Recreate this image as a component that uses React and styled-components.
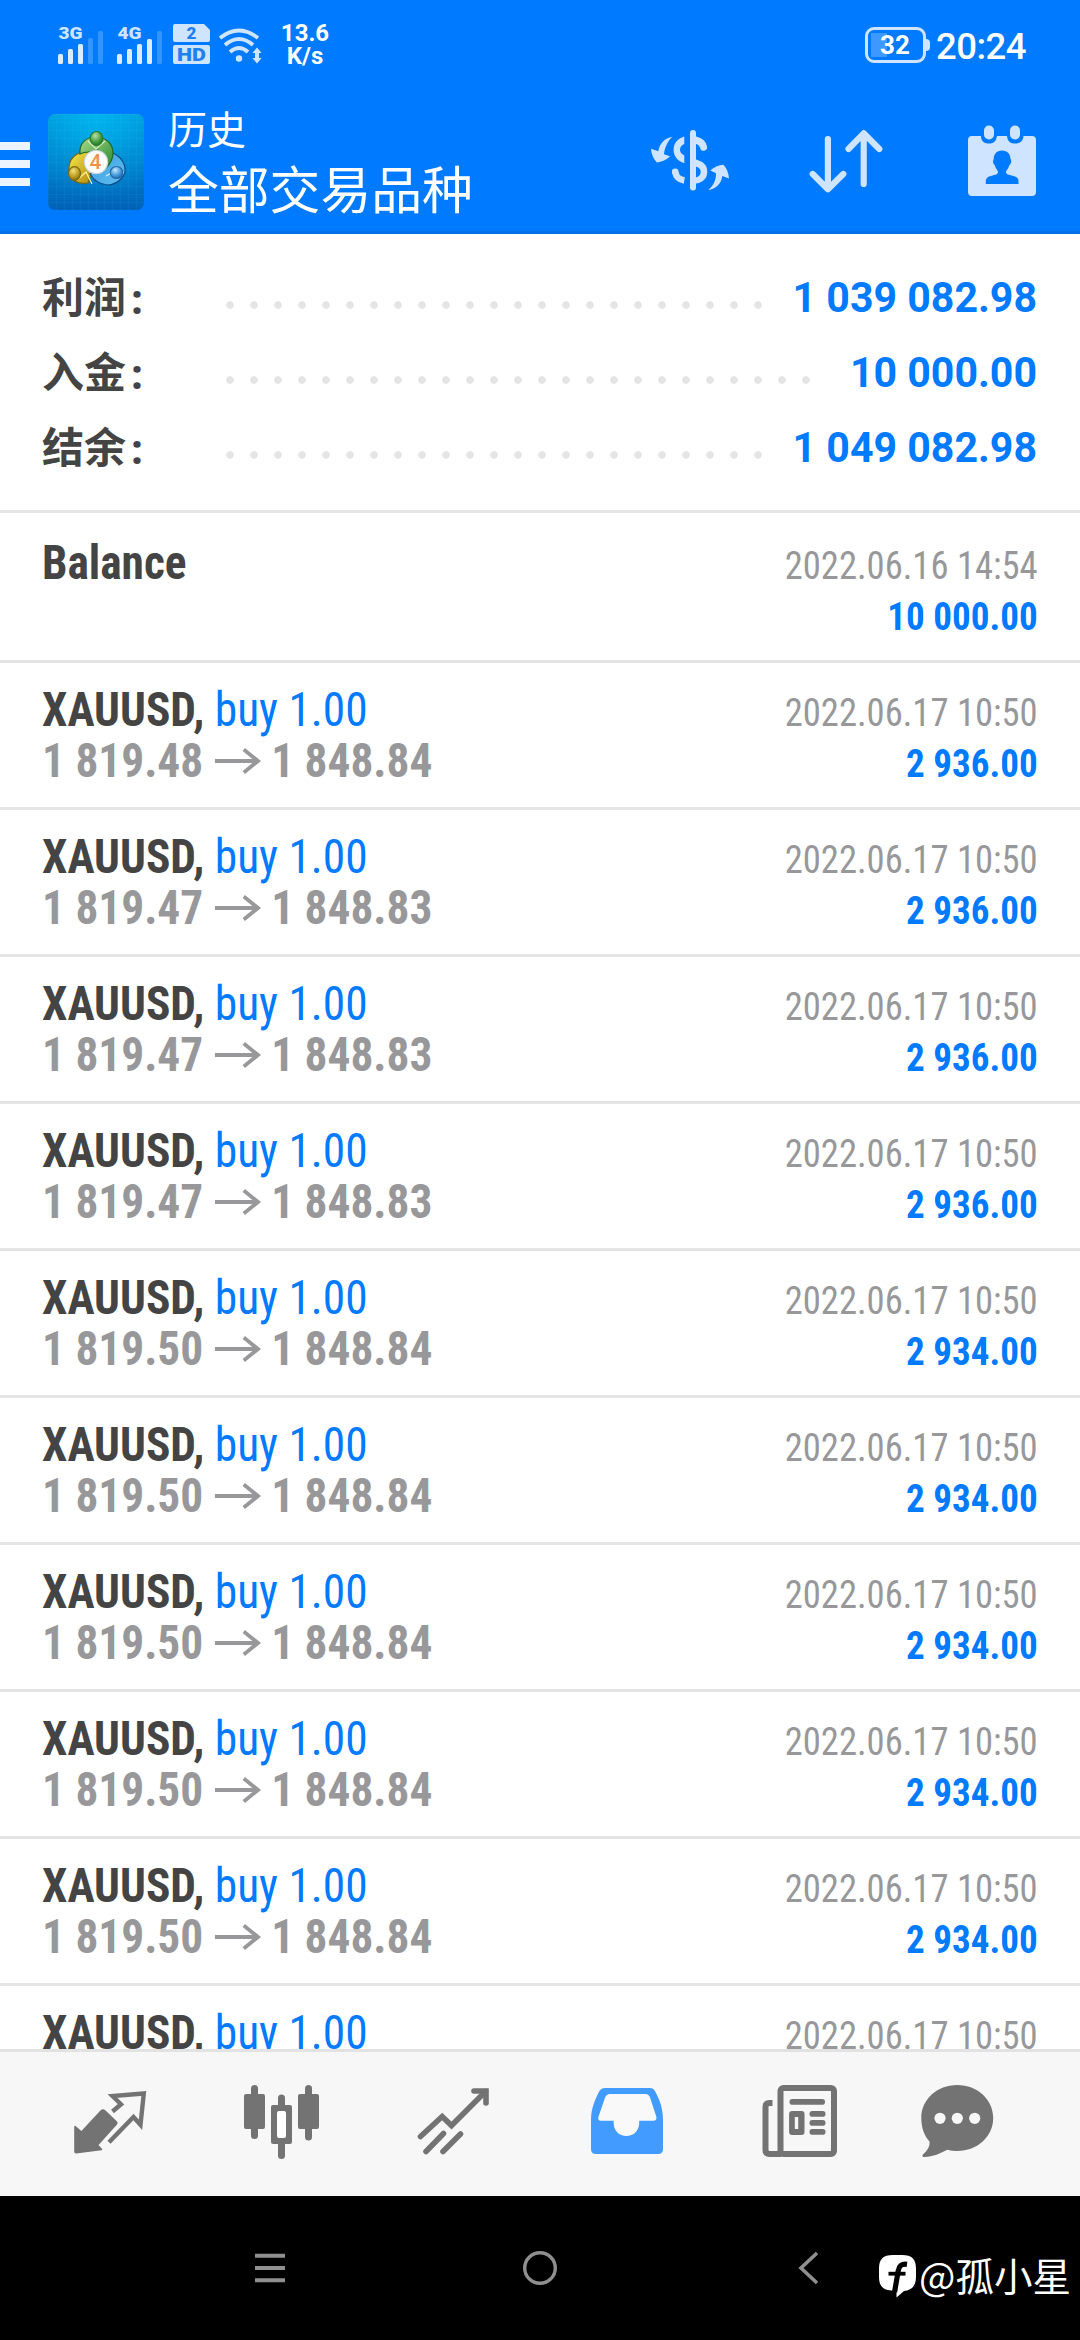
import React from 'react';
import styled, { createGlobalStyle } from 'styled-components';

const BLUE = '#007aff';
const PALE = '#cfe4ff';
const GREY = '#737373';

const GlobalStyle = createGlobalStyle`
  * { box-sizing: border-box; }
  body { margin: 0; background: #000; }
`;

const Screen = styled.div`
  display: flex;
  flex-direction: column;
  width: 1080px;
  height: 2340px;
  overflow: hidden;
  background: #fff;
  font-family: Roboto, 'Noto Sans CJK SC', sans-serif;
  svg { display: block; flex: none; overflow: visible; }
`;

/* ---------- status bar ---------- */

const StatusBar = styled.div`
  flex: none;
  display: flex;
  justify-content: space-between;
  height: 90px;
  padding: 22px 54px 0 58px;
  background: ${BLUE};
  color: #fff;
`;

const StatusGroup = styled.div`
  display: flex;
  align-items: flex-start;
`;

const Speed = styled.div`
  width: 60px;
  margin-left: 13px;
  font-size: 24px;
  font-weight: 700;
  line-height: 23px;
  text-align: center;
`;

const Battery = styled.div`
  position: relative;
  display: flex;
  align-items: center;
  justify-content: center;
  width: 61px;
  height: 36px;
  margin: 5px 10px 0 0;
  border: 3px solid ${PALE};
  border-radius: 9px;
  font-size: 26px;
  font-weight: 700;
  line-height: 30px;
  padding-right: 1px;
  background: linear-gradient(#3d99ff, #3d99ff) 3px 3px / 16px 24px no-repeat;
  &::after {
    content: '';
    position: absolute;
    right: -7px;
    top: 9px;
    width: 4px;
    height: 12px;
    border-radius: 0 5px 5px 0;
    background: ${PALE};
  }
`;

const Clock = styled.div`
  padding-top: 1px;
  font-size: 36.5px;
  font-weight: 500;
  line-height: 48px;
  letter-spacing: -0.5px;
`;

const SvgLabel = styled.text`
  font-family: Roboto, sans-serif;
  font-weight: ${(p) => p.$weight || 900};
  font-size: ${(p) => p.$size}px;
`;

const Signal = ({ label, heights, active }) => (
  <svg width="44" height="44" viewBox="0 0 44 44">
    <SvgLabel $size={16.5} x="0.5" y="17" fill={PALE} textLength="24" lengthAdjust="spacingAndGlyphs">
      {label}
    </SvgLabel>
    {heights.map((h, i) => (
      <rect
        key={i}
        x={i * 10}
        y={42 - h}
        width="5"
        height={h}
        rx="1.5"
        fill={i < active ? '#dcecff' : '#3395ff'}
      />
    ))}
  </svg>
);

const Spaced = styled.div`
  margin-left: ${(p) => p.$left}px;
`;

const HdBadge = () => (
  <svg width="37" height="44" viewBox="0 0 37 44">
    <path d="M2 2H31L37 8V18a2 2 0 0 1-2 2H2a2 2 0 0 1-2-2V4a2 2 0 0 1 2-2z" fill={PALE} />
    <rect y="23" width="37" height="19" rx="2" fill={PALE} />
    <SvgLabel $size={17} x="18.5" y="17" textAnchor="middle" fill="#1f80f0">2</SvgLabel>
    <SvgLabel $size={18} x="4" y="39" textLength="29" lengthAdjust="spacingAndGlyphs" fill="#1f80f0">HD</SvgLabel>
  </svg>
);

const Wifi = () => (
  <svg width="43" height="44" viewBox="0 0 43 44">
    <g fill="none" stroke={PALE} strokeWidth="3.8">
      <path d="M1 16Q20 1 39 16" />
      <path d="M6 23Q20 11 34 23" />
      <path d="M11 30Q20 22 29 30" />
    </g>
    <circle cx="20" cy="36.5" r="3.2" fill={PALE} />
    <path d="M38 25.5L42.6 31H40V36H42.6L38 41.5L33.4 36H36V31H33.4Z" fill={PALE} />
  </svg>
);

/* ---------- app bar ---------- */

const AppBar = styled.header`
  flex: none;
  display: flex;
  align-items: flex-start;
  height: 144px;
  padding: 14px 44px 0 0;
  background: ${BLUE};
  border-bottom: 3px solid #006fe8;
`;

const Burger = styled.div`
  width: 30px;
  height: 44px;
  margin: 38px 18px 0 0;
  display: flex;
  flex-direction: column;
  justify-content: space-between;
  i { height: 8px; background: #ebf4ff; }
`;

const LogoBox = styled.div`
  width: 96px;
  height: 96px;
  margin-top: 10px;
  border-radius: 7px;
  overflow: hidden;
  background:
    repeating-linear-gradient(90deg, rgba(90, 210, 255, 0.07) 0 1px, transparent 1px 8px),
    repeating-linear-gradient(rgba(90, 210, 255, 0.07) 0 1px, transparent 1px 8px),
    radial-gradient(circle at 50% 0, #00b4ee 0, rgba(0, 160, 225, 0.4) 50%, transparent 80%),
    linear-gradient(#009edb, #0062b8);
`;

const Titles = styled.div`
  flex: 1;
  margin: -3px 0 0 24px;
  color: #fff;
  font-family: 'Noto Sans CJK SC', sans-serif;
`;

const Subtitle = styled.div`
  font-size: 39px;
  line-height: 52px;
`;

const Title = styled.div`
  font-size: 50.8px;
  line-height: 68px;
`;

const Actions = styled.div`
  display: grid;
  grid-template-columns: 159px 158px 68px;
  align-items: start;
  padding-top: 19px;
`;

const Logo = () => (
  <LogoBox>
    <svg width="96" height="96" viewBox="0 0 96 96">
      <defs>
        <linearGradient id="lg-green" x1="0" y1="0" x2="1" y2="1">
          <stop offset="0" stopColor="#a9d98a" />
          <stop offset="1" stopColor="#2b8a2f" />
        </linearGradient>
        <linearGradient id="lg-yellow" x1="0" y1="0" x2="1" y2="1">
          <stop offset="0" stopColor="#f7ea4a" />
          <stop offset="1" stopColor="#b58a10" />
        </linearGradient>
        <linearGradient id="lg-blue" x1="0" y1="0" x2="1" y2="1">
          <stop offset="0" stopColor="#3d9be0" />
          <stop offset="1" stopColor="#5fc0f0" />
        </linearGradient>
        <radialGradient id="lg-hg" cx="0.4" cy="0.3" r="0.8">
          <stop offset="0" stopColor="#b8e0a8" />
          <stop offset="0.6" stopColor="#3f9a3a" />
          <stop offset="1" stopColor="#1f6a25" />
        </radialGradient>
        <radialGradient id="lg-hy" cx="0.4" cy="0.3" r="0.8">
          <stop offset="0" stopColor="#f2e07a" />
          <stop offset="0.6" stopColor="#b8981c" />
          <stop offset="1" stopColor="#6e5a10" />
        </radialGradient>
        <radialGradient id="lg-hb" cx="0.4" cy="0.3" r="0.8">
          <stop offset="0" stopColor="#c3e6fb" />
          <stop offset="0.6" stopColor="#3c94d8" />
          <stop offset="1" stopColor="#1a5a9c" />
        </radialGradient>
      </defs>
      <g strokeWidth="1.2">
        <path d="M21 57C20 44 29 37 41 38L44 58L40 69C30 71 22 66 21 57Z" fill="url(#lg-yellow)" stroke="#77680f" />
        <path d="M60 38C70 39 78 48 77 58C74 67 66 71 59 71C51 70 45 65 42 60L56 52Z" fill="url(#lg-blue)" stroke="#0d4c88" />
        <path d="M32 40C31 29 38 23 48 23C58 23 65 30 65 39C65 46 62 50 58 54L50 36L40 38C37 38 34 39 32 40Z" fill="url(#lg-green)" stroke="#1f6a25" />
        <path d="M40 27L48 35L57 27" fill="none" stroke="#d6efc4" />
        <path d="M29 66L38 58L44 70" fill="none" stroke="#fff3a0" />
        <path d="M58 62L67 57L76 59" fill="none" stroke="#d4efff" />
        <ellipse cx="48.5" cy="24.5" rx="6.3" ry="7" fill="url(#lg-hg)" stroke="#2b7a2f" />
        <ellipse cx="26.5" cy="59.5" rx="6" ry="6.8" fill="url(#lg-hy)" stroke="#7d6812" />
        <ellipse cx="68.5" cy="58.5" rx="6.2" ry="6" fill="url(#lg-hb)" stroke="#2468a8" />
        <circle cx="48" cy="48" r="11.6" fill="#fff" stroke="#c9d6dc" />
      </g>
      <SvgLabel $size={21} $weight={500} x="47.5" y="55.3" textAnchor="middle" fill="#f2924a">
        4
      </SvgLabel>
    </svg>
  </LogoBox>
);

const CurrencyIcon = () => (
  <svg width="80" height="74" viewBox="0 0 80 74">
    <g fill="none" stroke={PALE} strokeLinecap="round">
      <path d="M42 10V64.5" strokeWidth="6" />
      <path d="M44.500 17C49 18 51.800 20.500 52.600 24.300" strokeWidth="7" />
      <path d="M24.200 49C25 53.500 28.300 56.600 33.300 57.500" strokeWidth="6.500" strokeLinecap="butt" />
    </g>
    <circle cx="24.200" cy="48.800" r="3.300" fill={PALE} />
    <path d="M33.300 13.500C26.500 15.500 22.600 20.500 22.600 26.800C22.600 33.500 27 38.500 33.300 40.200V32.500C30.500 31 29 29.500 29 26.800C29 24 30.500 22.200 33.300 21Z" fill={PALE} />
    <path d="M44.500 36.300C52 38.500 56.300 42 56.300 48.500C56.300 55.500 52 59.800 44.500 60.600V54.600C48 54 49.700 52 49.700 48.600C49.700 46 48 44.500 44.500 43.500Z" fill={PALE} />
    <path d="M21.300 13.800C14 15 8.500 20.500 7.300 28.300L0 25.800C0.500 31.500 2.500 36.500 5.900 39.500C11 38.700 15.500 37 19 33.300L13 31.300C13.500 25 16.500 18.500 21.300 13.800Z" fill={PALE} />
    <path d="M57.300 67C64.700 66.300 70.500 60.500 71.300 53L78 55.500C77.500 49.800 75.800 45 72.300 41.800C67.500 42.300 63 44 59.300 47.500L65 50.200C65.200 57 62.500 62.500 57.300 67Z" fill={PALE} />
  </svg>
);

const SortIcon = () => (
  <svg width="74" height="74" viewBox="0 0 74 74">
    <g fill="none" stroke={PALE} strokeWidth="6.2" strokeLinecap="round" strokeLinejoin="round">
      <path d="M17.9 16V65M2.700 51L17.900 66.300L33.300 51" />
      <path d="M53.700 61V11M38.500 26L53.700 10.300L69.300 26" />
    </g>
  </svg>
);

const CalendarIcon = () => (
  <svg width="68" height="74" viewBox="0 0 68 74">
    <path d="M4 13H13C13 19 17 20.5 21 20.5S28 19 29 13H39C39.500 19 43 20.500 47 20.500S55 19 55.500 13H64a4 4 0 0 1 4 4V69a4 4 0 0 1-4 4H4a4 4 0 0 1-4-4V17a4 4 0 0 1 4-4z" fill={PALE} />
    <rect x="16" y="2.500" width="10" height="14" rx="5" fill={PALE} />
    <rect x="42" y="2.500" width="10" height="14" rx="5" fill={PALE} />
    <path d="M34 27.500C39.500 27.500 42.500 31.500 42.500 36C44 38 43 41 41.500 42C40.500 45 39 47 38 48.500C38 50 38.500 51 40 51.500L47 53.500C49.500 54.500 50.500 56 50.500 58V61H17.800V58C17.800 56 19 54.500 21 53.500L28 51.500C29.500 51 30 50 30 48.500C29 47 27.500 45 26.700 42C25 41 24.500 38 25.700 36C25.700 31.500 28.500 27.500 34 27.500Z" fill={BLUE} />
  </svg>
);

/* ---------- summary ---------- */

const Summary = styled.section`
  flex: none;
  height: 279px;
  padding: 26px 43px 0 42px;
  border-bottom: 3px solid #e5e5e5;
`;

const SummaryRow = styled.div`
  display: flex;
  align-items: center;
  height: 75px;
  color: #444;
`;

const SummaryLabel = styled.div`
  display: flex;
  align-items: center;
  width: 176px;
  font-size: 42px;
  font-weight: 700;
  line-height: 60px;
`;

const LabelText = styled.span`
  margin-top: -5px;
  font-family: 'Noto Sans CJK SC', sans-serif;
`;

const Colon = styled.span`
  margin-left: 5px;
  font-family: 'Open Sans', sans-serif;
`;

const Dots = styled.div`
  width: ${(p) => p.$count * 24}px;
  height: 24px;
  margin-top: 15px;
  background: radial-gradient(circle, #e4e4e4 3.4px, transparent 4.2px) 0 0 / 24px 24px;
`;

const SummaryValue = styled.div`
  flex: 1;
  text-align: right;
  font-size: 42px;
  font-weight: 700;
  color: ${BLUE};
  transform: scaleX(0.978);
  transform-origin: right;
`;

/* ---------- deals ---------- */

const List = styled.main`
  flex: 1;
  min-height: 0;
  overflow: hidden;
  padding-top: 3px;
  font-family: 'Roboto Condensed', Roboto, sans-serif;
  font-stretch: 75%;
`;

const Deal = styled.div`
  display: flex;
  justify-content: space-between;
  align-items: baseline;
  height: 147px;
  padding: 21px 42px 0 42px;
  border-bottom: 3px solid #e5e5e5;
  white-space: nowrap;
  line-height: 51px;
`;

const DealMain = styled.div`
  font-size: 48px;
  transform: scaleX(0.945);
  transform-origin: left;
`;

const Symbol = styled.span`
  font-weight: 700;
  color: #444;
`;

const Side = styled.span`
  color: ${BLUE};
`;

const Prices = styled.div`
  display: flex;
  align-items: center;
  font-weight: 700;
  color: #98989b;
`;

const DealMeta = styled.div`
  text-align: right;
  font-size: 39px;
`;

const Time = styled.div`
  color: #98989b;
  transform: scaleX(0.938);
  transform-origin: right;
`;

const Profit = styled.div`
  font-weight: 700;
  color: ${BLUE};
  transform: scaleX(0.95);
  transform-origin: right;
`;

const Arrow = styled.svg`
  margin: 0 12px 0 12px;
`;

const PriceArrow = () => (
  <Arrow width="48" height="26" viewBox="0 0 48 26">
    <path d="M0 13H45M30.500 1.500L45.500 13L30.500 24.500" fill="none" stroke="#98989b" strokeWidth="4" />
  </Arrow>
);

/* ---------- tabs and system bar ---------- */

const TabBar = styled.nav`
  flex: none;
  display: grid;
  grid-template-columns: 172px 173px 173.6px 171.9px 159px 73px;
  height: 147px;
  padding: 32px 0 0 72px;
  background: #f7f7f7;
  border-top: 3px solid #e2e2e2;
`;

const SystemBar = styled.footer`
  flex: none;
  position: relative;
  display: flex;
  justify-content: center;
  gap: 237px;
  height: 144px;
  padding-top: 56px;
  background: #000;
`;

const Watermark = styled.div`
  position: absolute;
  right: 9px;
  bottom: 39px;
  display: flex;
  align-items: flex-start;
  color: #fff;
  font-family: 'Noto Sans CJK SC', sans-serif;
  font-size: 38.5px;
  line-height: 54px;
  white-space: nowrap;
  svg { margin: 8px 2px 0 0; }
`;

const TradeIcon = () => (
  <svg width="74" height="76" viewBox="72 2084 74 76">
    <path d="M75 2126.500L81.500 2132L101 2111Q103 2109 105 2111L116 2121.500Q117.500 2123 116 2124.500L97.500 2145L101.500 2149.500L76 2152.700Q75 2152.700 75 2151.700Z" fill={GREY} stroke={GREY} strokeWidth="1.600" strokeLinejoin="round" />
    <path d="M112.500 2111.500L121 2104.300L112.500 2096L143.800 2093.500L140.500 2124.800L133.500 2117L109 2142.300" fill="none" stroke={GREY} strokeWidth="4.400" />
  </svg>
);

const CandlesIcon = () => (
  <svg width="76" height="76" viewBox="244 2084 76 76">
    <g fill={GREY}>
      <rect x="251" y="2085" width="7" height="54" rx="3.500" />
      <rect x="244" y="2094" width="21" height="35" rx="2" />
      <rect x="305" y="2085" width="7" height="55.500" rx="3.500" />
      <rect x="298" y="2094" width="21" height="35" rx="2" />
      <rect x="278" y="2094.500" width="7" height="64.500" rx="3.500" />
      <rect x="271" y="2105" width="21" height="39" rx="2" />
    </g>
    <rect x="277" y="2111" width="9" height="27" rx="2" fill="#fff" />
  </svg>
);

const TrendIcon = () => (
  <svg width="74" height="76" viewBox="417 2084 74 76">
    <g fill="none" stroke={GREY} strokeWidth="5.600" strokeLinecap="round">
      <path d="M420.500 2136.500L442.200 2116.500L451.500 2125.500L485.500 2091.500" />
      <path d="M474 2091H486V2103" />
      <path d="M443.500 2133.500L426 2151.500M460.500 2134L443 2151.500" />
    </g>
  </svg>
);

const InboxIcon = () => (
  <svg width="72" height="76" viewBox="590.600 2084 72 76">
    <path
      d="M604.500 2088H649.500C652 2088 653.500 2089 654.500 2091C659 2099 662.600 2108 662.600 2120V2149Q662.600 2154 657.600 2154H595.600Q590.600 2154 590.600 2149V2120C590.600 2108 595 2099 599 2091C600.500 2089 602 2088 604.500 2088Z"
      fill="#429cff"
    />
    <path
      d="M609.500 2094H645Q648 2094 649.500 2097L656 2117Q656.500 2120.700 653 2120.700H638.800C639.500 2131 633 2136 626 2136S612.500 2131 613.300 2120.700H600.500Q597 2120.700 598 2117L604.500 2098Q606 2094 609.500 2094Z"
      fill="#f9f9f9"
    />
  </svg>
);

const NewsIcon = () => (
  <svg width="75" height="76" viewBox="762.500 2084 75 76">
    <g fill="none" stroke={GREY} strokeWidth="6">
      <rect x="781" y="2088" width="53.500" height="66" rx="3" />
      <path d="M773 2103H770Q766 2103 766 2107V2150Q766 2154 770 2154H782" />
    </g>
    <g fill={GREY}>
      <rect x="790" y="2099" width="35.500" height="5.700" rx="2.800" />
      <rect x="789.600" y="2111" width="15.400" height="24" rx="3" />
      <rect x="810" y="2111" width="16" height="5.700" rx="2.800" />
      <rect x="810" y="2120" width="16" height="5.700" rx="2.800" />
      <rect x="810" y="2129" width="16" height="5.700" rx="2.800" />
    </g>
    <rect x="795.300" y="2117" width="3.400" height="12" fill="#f7f7f7" />
  </svg>
);

const ChatIcon = () => (
  <svg width="73" height="76" viewBox="921.500 2084 73 76">
    <path
      d="M957.700 2085C978 2085 993.700 2099.500 993.700 2118S978 2151 957.700 2151Q952 2151 947.800 2149.800C941 2153.500 932 2157.500 924 2157Q922 2156 923.500 2154.500C928.500 2150 930.500 2146 930 2141.500C925 2136 921.800 2128 921.800 2118C921.800 2099.500 937.500 2085 957.700 2085Z"
      fill={GREY}
    />
    <circle cx="940.500" cy="2118.300" r="5.600" fill="#f7f7f7" />
    <circle cx="957.800" cy="2118.300" r="5.600" fill="#f7f7f7" />
    <circle cx="975.200" cy="2118.300" r="5.600" fill="#f7f7f7" />
  </svg>
);

const WatermarkLogo = () => (
  <svg width="38" height="44" viewBox="0 0 38 44">
    <path d="M14 0H23C33 0 37 4 37 14V22C37 31 33 35 25 36L17.500 42.500L17.500 35.500H12C4 35 0 31 0 22V14C0 4 4 0 14 0Z" fill="#fff" />
    <path d="M28 9.300C22.500 8.600 19.800 11 19.200 16L15.600 37" fill="none" stroke="#000" strokeWidth="5.200" />
    <path d="M9.500 18.700H26.500" fill="none" stroke="#000" strokeWidth="3.800" />
  </svg>
);

/* ---------- data ---------- */

const totals = [
  { label: '利润', dots: 23, value: '1 039 082.98' },
  { label: '入金', dots: 25, value: '10 000.00' },
  { label: '结余', dots: 23, value: '1 049 082.98' },
];

const trade = (open, close, profit) => ({ open, close, profit, time: '2022.06.17 10:50' });

const deals = [
  trade('1 819.48', '1 848.84', '2 936.00'),
  trade('1 819.47', '1 848.83', '2 936.00'),
  trade('1 819.47', '1 848.83', '2 936.00'),
  trade('1 819.47', '1 848.83', '2 936.00'),
  trade('1 819.50', '1 848.84', '2 934.00'),
  trade('1 819.50', '1 848.84', '2 934.00'),
  trade('1 819.50', '1 848.84', '2 934.00'),
  trade('1 819.50', '1 848.84', '2 934.00'),
  trade('1 819.50', '1 848.84', '2 934.00'),
];

export default function App() {
  return (
    <Screen>
      <GlobalStyle />
      <StatusBar>
        <StatusGroup>
          <Signal label="3G" heights={[10, 15, 20, 26, 33]} active={3} />
          <Spaced $left={15}>
            <Signal label="4G" heights={[10, 15, 20, 25, 33]} active={4} />
          </Spaced>
          <Spaced $left={12}><HdBadge /></Spaced>
          <Spaced $left={9}><Wifi /></Spaced>
          <Speed>13.6<br />K/s</Speed>
        </StatusGroup>
        <StatusGroup>
          <Battery>32</Battery>
          <Clock>20:24</Clock>
        </StatusGroup>
      </StatusBar>

      <AppBar>
        <Burger><i /><i /><i /></Burger>
        <Logo />
        <Titles>
          <Subtitle>历史</Subtitle>
          <Title>全部交易品种</Title>
        </Titles>
        <Actions>
          <CurrencyIcon />
          <SortIcon />
          <CalendarIcon />
        </Actions>
      </AppBar>

      <Summary>
        {totals.map((t) => (
          <SummaryRow key={t.label}>
            <SummaryLabel>
              <LabelText>{t.label}</LabelText>
              <Colon>:</Colon>
            </SummaryLabel>
            <Dots $count={t.dots} />
            <SummaryValue>{t.value}</SummaryValue>
          </SummaryRow>
        ))}
      </Summary>

      <List>
        <Deal>
          <DealMain><Symbol>Balance</Symbol></DealMain>
          <DealMeta>
            <Time>2022.06.16 14:54</Time>
            <Profit>10 000.00</Profit>
          </DealMeta>
        </Deal>
        {deals.map((d, i) => (
          <Deal key={i}>
            <DealMain>
              <Symbol>XAUUSD,</Symbol> <Side>buy 1.00</Side>
              <Prices>{d.open}<PriceArrow />{d.close}</Prices>
            </DealMain>
            <DealMeta>
              <Time>{d.time}</Time>
              <Profit>{d.profit}</Profit>
            </DealMeta>
          </Deal>
        ))}
        <Deal>
          <DealMain><Symbol>XAUUSD,</Symbol> <Side>buy 1.00</Side></DealMain>
          <DealMeta><Time>2022.06.17 10:50</Time></DealMeta>
        </Deal>
      </List>

      <TabBar>
        <TradeIcon />
        <CandlesIcon />
        <TrendIcon />
        <InboxIcon />
        <NewsIcon />
        <ChatIcon />
      </TabBar>

      <SystemBar>
        <svg width="32" height="32" viewBox="0 0 32 32">
          <path d="M1 3.700H31M1 16H31M1 28.300H31" stroke="#8f8f8f" strokeWidth="4" />
        </svg>
        <svg width="34" height="34" viewBox="0 0 34 34">
          <circle cx="17" cy="16" r="15.300" fill="none" stroke="#8f8f8f" strokeWidth="3.400" />
        </svg>
        <svg width="32" height="32" viewBox="0 0 32 32">
          <path d="M23 1L7 16L23 31" fill="none" stroke="#8f8f8f" strokeWidth="3.600" />
        </svg>
        <Watermark>
          <WatermarkLogo />
          @孤小星
        </Watermark>
      </SystemBar>
    </Screen>
  );
}
